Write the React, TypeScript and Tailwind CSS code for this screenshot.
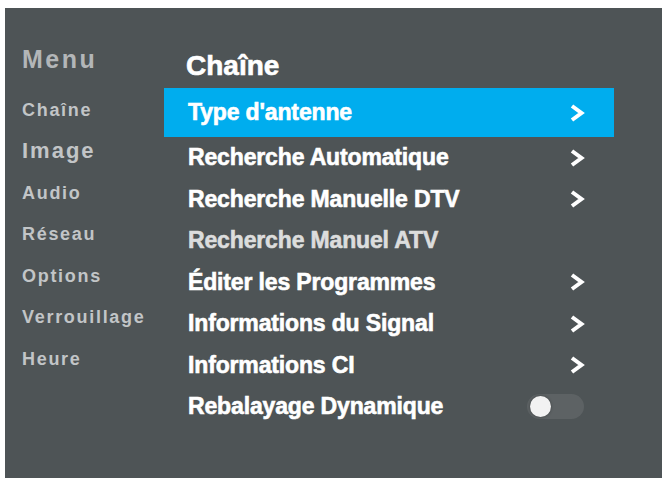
import React from "react";

const leftItems: { label: string; big?: boolean }[] = [
  { label: "Chaîne" },
  { label: "Image", big: true },
  { label: "Audio" },
  { label: "Réseau" },
  { label: "Options" },
  { label: "Verrouillage" },
  { label: "Heure" },
];

type Row = { label: string; kind: "arrow" | "none" | "toggle"; dim?: boolean };

const rows: Row[] = [
  { label: "Recherche Automatique", kind: "arrow" },
  { label: "Recherche Manuelle DTV", kind: "arrow" },
  { label: "Recherche Manuel ATV", kind: "none", dim: true },
  { label: "Éditer les Programmes", kind: "arrow" },
  { label: "Informations du Signal", kind: "arrow" },
  { label: "Informations CI", kind: "arrow" },
  { label: "Rebalayage Dynamique", kind: "toggle" },
];

function Chevron() {
  return (
    <svg width="16" height="20" viewBox="0 0 16 20" className="mr-[29px] shrink-0">
      <polyline
        points="3,3 12.5,10 3,17"
        fill="none"
        stroke="#ffffff"
        strokeWidth="4"
        strokeLinejoin="miter"
      />
    </svg>
  );
}

function Toggle() {
  return (
    <div className="mr-[30px] flex h-[25px] w-[57px] shrink-0 items-center rounded-full bg-[#5d6264] pl-[3px]">
      <div className="h-[21px] w-[21px] rounded-full bg-[#f2f2f2] shadow-[0_0_3px_rgba(0,0,0,0.35)]" />
    </div>
  );
}

export default function App() {
  return (
    <div
      className="h-[478px] w-[665px] overflow-hidden bg-white"
      style={{ fontFamily: '"Liberation Sans", Arial, sans-serif' }}
    >
      <div className="ml-[5px] mt-[8px] flex h-[470px] w-[657px] bg-[#4e5456]">
        {/* Left column */}
        <div className="w-[159px] shrink-0 pl-[17px] pt-[30px]">
          <div className="flex h-[42px] items-center text-[25px] font-bold leading-none tracking-[2.5px] text-[#b3b6b8]">
            Menu
          </div>
          <div className="mt-[9px] flex flex-col">
            {leftItems.map((it) => (
              <div
                key={it.label}
                className={
                  it.big
                    ? "flex h-[41.5px] items-center text-[22px] font-bold leading-none tracking-[2px] text-[#c2c5c7]"
                    : "flex h-[41.5px] items-center text-[18px] font-bold leading-none tracking-[1.7px] text-[#c2c5c7]"
                }
              >
                {it.label}
              </div>
            ))}
          </div>
        </div>

        {/* Right column */}
        <div className="w-[450px] shrink-0 pt-[40px]">
          <div className="flex h-[36px] items-center pl-[22px] text-[28px] font-bold leading-none text-white [-webkit-text-stroke:0.6px_#ffffff]">
            Chaîne
          </div>
          <div className="mt-[4px] flex h-[49px] items-center justify-between bg-[#00adee] pl-[24px]">
            <span className="text-[23px] font-bold leading-none tracking-[-0.15px] text-white [-webkit-text-stroke:0.6px_#ffffff]">
              Type d'antenne
            </span>
            <Chevron />
          </div>
          {rows.map((r) => (
            <div key={r.label} className="flex h-[41.5px] items-center justify-between pl-[24px]">
              <span
                className={
                  r.dim
                    ? "text-[23px] font-bold leading-none tracking-[-0.15px] text-[#dcdddd] [-webkit-text-stroke:0.6px_#dcdddd]"
                    : "text-[23px] font-bold leading-none tracking-[-0.15px] text-white [-webkit-text-stroke:0.6px_#ffffff]"
                }
              >
                {r.label}
              </span>
              {r.kind === "arrow" && <Chevron />}
              {r.kind === "toggle" && <Toggle />}
            </div>
          ))}
        </div>
      </div>
    </div>
  );
}
